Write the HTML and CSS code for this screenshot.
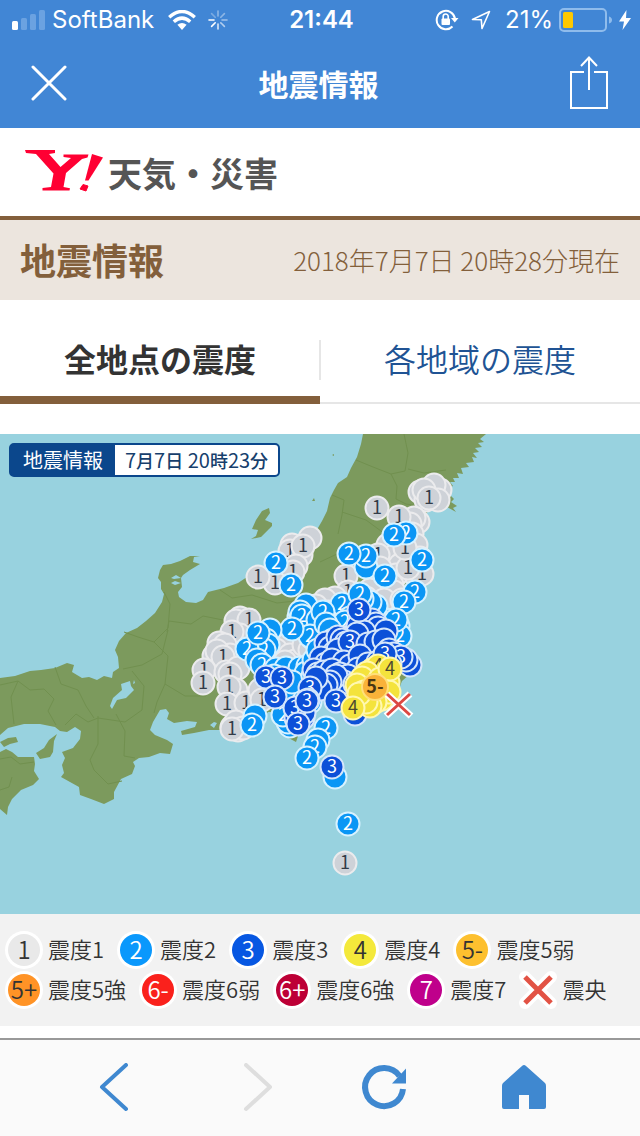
FILE: index.html
```html
<!DOCTYPE html>
<html lang="ja">
<head>
<meta charset="utf-8">
<meta name="viewport" content="width=device-width, initial-scale=1">
<title>地震情報</title>
<link rel="stylesheet" href="styles.css">
</head>
<body>
<header class="app-header">
  <div class="status">
    <div class="status-left">
      <svg width="34" height="20" viewBox="0 0 34 20" aria-hidden="true"><rect x="0" y="11" width="6" height="9" rx="1.5" fill="#fff"/><g fill="#6ba2e1"><rect x="9" y="8" width="6" height="12" rx="1.5"/><rect x="18" y="4" width="6" height="16" rx="1.5"/><rect x="27" y="0" width="6" height="20" rx="1.5"/></g></svg>
      <span>SoftBank</span>
      <svg class="wifi" width="28" height="20" viewBox="0 0 28 20" fill="none" stroke="#fff" stroke-width="3.4" aria-hidden="true"><path d="M1.2 7.2Q14-4.2 26.800 7.200M5.800 11.800Q14 4.400 22.200 11.800"/><path d="M14 20l-4.600-5.200Q14 11 18.600 14.800z" fill="#fff" stroke="none"/></svg>
      <svg class="spinner" width="20" height="20" viewBox="0 0 20 20" stroke="#fff" stroke-width="1.6" stroke-linecap="round" aria-hidden="true"><path d="M10 1v5" opacity=".4"/><path d="M16.400 3.600L12.800 7.200" opacity=".4"/><path d="M19 10h-5" opacity=".5"/><path d="M16.400 16.400l-3.600-3.600" opacity=".6"/><path d="M10 19v-5" opacity=".8"/><path d="M3.600 16.400l3.600-3.600M1 10h5"/><path d="M3.600 3.600l3.600 3.600" opacity=".3"/></svg>
    </div>
    <time class="clock">21:44</time>
    <div class="status-right">
      <svg width="24" height="22" viewBox="0 0 24 22" fill="none" stroke="#fff" stroke-width="2" aria-hidden="true"><path d="M17.500 17.500A9.200 9.200 0 1 1 20 9.500"/><path d="M16 9h7.500l-3.700 4.500z" fill="#fff" stroke="none"/><rect x="6.500" y="9.500" width="8.500" height="6.500" rx="1" fill="#fff" stroke="none"/><path d="M8.200 10V7.500a2.500 2.500 0 0 1 5 0V10" stroke-width="1.600"/></svg>
      <svg class="arrow" width="20" height="20" viewBox="0 0 20 20" fill="none" stroke="#fff" stroke-width="1.600" stroke-linejoin="round" aria-hidden="true"><path d="M1.500 9.500L18.500 1.500 11 18.500 10.300 9.800z"/></svg>
      <span>21%</span>
      <svg width="54" height="24" viewBox="0 0 54 24" aria-hidden="true"><rect x="1" y="1" width="46" height="22" rx="4" fill="none" stroke="#8fbcec" stroke-width="2"/><rect x="4" y="4" width="10" height="16" rx="1.500" fill="#fdc800"/><path d="M50 8.500q3 1 3 3.500t-3 3.500z" fill="#8fbcec"/></svg>
      <svg class="bolt" width="12" height="20" viewBox="0 0 12 20" fill="#fff" aria-hidden="true"><path d="M7.500 0L0 11.500h5L3.500 20 12 8H7z"/></svg>
    </div>
  </div>
  <div class="nav">
    <button type="button" class="icon-button" aria-label="閉じる"><svg width="36" height="36" viewBox="0 0 36 36" stroke="#fff" stroke-width="3" stroke-linecap="round"><path d="M2 2l32 32M34 2L2 34"/></svg></button>
    <h1 class="nav-title">地震情報</h1>
    <button type="button" class="icon-button" aria-label="共有"><svg width="38" height="54" viewBox="0 0 38 54" fill="none" stroke="#fff" stroke-width="2"><path d="M14 16H1v36h36V16H24M19 34V2M11 10l8-8.500L27 10"/></svg></button>
  </div>
</header>

<main>
  <a class="brand" href="#" aria-label="Y! 天気・災害">
    <svg width="80" height="44" viewBox="0 0 80 44" fill="#ff0033" aria-hidden="true"><path d="M0 0H30V3L24 4 35.500 17 46 8 38.500 7V4.500H63.500L62.500 7.500 57 9 41 23 38.500 37 45 38.200 44.500 40.500H17.500V38L26 37 28.500 23.500 11 4 1 3z"/><path d="M67 4L78 7.500 63.500 30.500H60z"/><path d="M58 34.500L63 36 61 41 55 39z" stroke="#ff0033" stroke-width="1" stroke-linejoin="round"/></svg>
    <span>天気・災害</span>
  </a>

  <section class="headline">
    <h2>地震情報</h2>
    <time datetime="2018-07-07T20:28">2018年7月7日 20時28分現在</time>
  </section>

  <nav class="tabs">
    <a class="tab tab-active" href="#points" aria-current="page">全地点の震度</a>
    <a class="tab" href="#areas">各地域の震度</a>
  </nav>

  <section class="map" id="points">
    <svg class="map-art" viewBox="0 434 640 480" role="img" aria-label="震度分布図">
      <rect x="0" y="434" width="640" height="480" fill="#98d2df"/>
      <g fill="#7c9a5d">
        <path d="M363 434L361 444 357 457 351 468 347 477 338 483 334 490 330 498 327 511 322 521 315 533 302 547 290 560 278 569 260 573 247 577 238 583 224 588 208 592 203 600 196 603 186 602 179 597 178 592 182 587 181 578 183 575 190 570 200 564 193 562 194 557 200 556 190 556 180 561 171 564 163 565 160 570 158 578 161 582 161 589 164 594 162 602 155 613 146 621 137 628 126 633 119 641 115 650 118 657 119 668 113 672 112 678 104 676 97 680 89 677 82 678 72 672 74 665 67 663 55 668 41 670 30 671 15 676 0 678V735L8 728 24 724 40 724 55 727 60 731 67 732 75 727 81 731 80 739 73 748 62 752 65 758 62 765 64 773 61 777 70 782 79 787 80 795 91 799 104 804 114 799 114 792 121 779 132 774 135 766 133 762 139 758 149 757 160 753 170 754 173 744 167 740 155 735 150 730 153 722 160 710 166 709 169 713 167 719 174 723 187 721 197 722 195 727 181 731 182 735 194 733 209 730 223 730 240 736 252 730 268 712 279 712 283 735 296 742 303 722 312 704 324 690 337 690 347 705 348 716 365 713 382 703 397 694 402 681 419 666 409 650 403 633 404 615 414 598 428 574 430 555 424 535 422 518 436 503 447 507 456 512 453 508 457 506 451 502 454 499 450 495 452 491 448 488 453 486 450 482 455 482 453 478 459 478 457 473 463 474 461 468 469 467 466 463 474 462 472 457 477 458 473 453 479 452 475 448 482 447 478 443 484 442 480 439 486 434z"/>
        <path d="M0 752L6 749 12 752 18 757 34 757 35 764 34 771 39 779 33 785 21 790 12 799 8 807 7 815 0 809z"/>
        <path d="M57 734L49 740 44 748 36 753 40 759 50 757 53 752 54 741zM0 742L8 738 16 737 18 742 10 744 4 747z"/>
        <path d="M269 508L262 511 256 520 252 529 258 530 256 536 251 539 261 537 272 526 272 523 265 520 270 513z"/>
        <path d="M312 501l2-3 1 3zM332 455l2-1v2z"/>
      </g>
      <g fill="#98d2df">
        <path d="M121 684L130 681 131 686 134 690 126 698 117 700 112 709 110 706 113 698 122 690z"/>
        <path d="M210 725l4-3 3 1-3 5zM171 578l5-3 5 3-7 1zM171 583l4-2 6 2-6 2zM134 680l1 3-2 1z"/>
      </g>
      <g fill="none" stroke="#71904f" stroke-width="1">
        <path d="M356 460l17 7 18 7 14-3 3-18-4-19M391 474l6 12-1 13 10 5 19 3M408 469l16 4 22-3M332 495l12 5-2 15-4 19M342 512l24 8 19 14 10 20M320 562l17-8 20-6 23 8M220 590l12 8 20-3 25 8 18-2M167 632l2-11 22 3 12-8 20 4M164 592l6 12-2 24-14 14-16-5-14-5M168 630l-6 24-20 11-19 4M154 642l14 14-3 28 20 12 21 0M165 684l-8 18-3 11M132 671l12 15-2 24-17 12-27-4-10 4-12-8-11 11M98 716v28l-8 16 4 10 14 14 14-3M116 714l9 17-1 25 11 2M55 667l6 17 17 6 8 16 8 12M0 685l18-4 12 9 14-1 10 10-6 12 8 14M18 681l-7 16 3 27M0 759l11-2 9 7 14-2M0 790l9-3 3-10"/>
      </g>
      <g id="markers" class="markers"></g>
      <g fill="none"><path d="M387 694l24 22M410 694l-24 22" stroke="#fff" stroke-width="7"/><path d="M387 694l23 21M410 694l-23 21" stroke="#dc4842" stroke-width="3"/></g>
    </svg>
    <div class="map-label"><strong>地震情報</strong><time datetime="2018-07-07T20:23">7<small>月</small>7<small>日</small> 20<small>時</small>23<small>分</small></time></div>
  </section>

  <ul class="legend">
    <li><b class="dot level-1">1</b><span>震度1</span></li>
    <li><b class="dot level-2">2</b><span>震度2</span></li>
    <li><b class="dot level-3">3</b><span>震度3</span></li>
    <li><b class="dot level-4">4</b><span>震度4</span></li>
    <li><b class="dot level-5l">5-</b><span>震度5弱</span></li>
    <li><b class="dot level-5u">5+</b><span>震度5強</span></li>
    <li><b class="dot level-6l">6-</b><span>震度6弱</span></li>
    <li><b class="dot level-6u">6+</b><span>震度6強</span></li>
    <li><b class="dot level-7">7</b><span>震度7</span></li>
    <li><svg class="epicenter" viewBox="0 0 32 32" fill="none" aria-hidden="true"><path d="M3 3l26 26M29 3L3 29" stroke="#fff" stroke-width="12" stroke-linecap="round"/><path d="M3 3l26 26M29 3L3 29" stroke="#e25244" stroke-width="5"/></svg><span>震央</span></li>
  </ul>
</main>

<footer class="toolbar">
  <button type="button" class="icon-button" aria-label="戻る"><svg width="60" height="50" viewBox="0 0 60 50" fill="none" stroke="#3f88d0" stroke-width="4" stroke-linecap="round" stroke-linejoin="round"><path d="M52 2L28 24l24 22"/></svg></button>
  <button type="button" class="icon-button" aria-label="進む" disabled><svg width="60" height="50" viewBox="0 0 60 50" fill="none" stroke="#dedede" stroke-width="4" stroke-linecap="round" stroke-linejoin="round"><path d="M32 2l24 22-24 22"/></svg></button>
  <button type="button" class="icon-button" aria-label="再読み込み"><svg width="60" height="50" viewBox="0 0 60 50" fill="none" stroke="#3f88d0" stroke-width="6"><path d="M49 26A19 19 0 1 1 45.500 13"/><path d="M52 5.500V20.500H38z" fill="#3f88d0" stroke="none"/></svg></button>
  <button type="button" class="icon-button" aria-label="ホーム"><svg width="60" height="50" viewBox="0 0 60 50" fill="#3f88d0"><path d="M28 3q2-2 4 0L51 20q1 1 1 3v21q0 2-2 2H35V32H25v14H10q-2 0-2-2V23q0-2 1-3z"/></svg></button>
</footer>
<script src="markers.js"></script>
</body>
</html>
```
FILE: styles.css
```css
* { box-sizing: border-box; }

body {
  margin: 0;
  min-height: 100vh;
  display: flex;
  flex-direction: column;
  background: #fff;
  color: #333;
  font-family: "Noto Sans CJK JP", sans-serif;
}

h1, h2, ul { margin: 0; padding: 0; }
a { text-decoration: none; color: inherit; }
svg { display: block; flex: none; }

.icon-button {
  display: flex;
  padding: 0;
  border: 0;
  background: none;
}

.app-header { background: #4186d5; color: #fff; }

.status {
  display: grid;
  grid-template-columns: 1fr auto 1fr;
  align-items: center;
  height: 40px;
  padding: 0 9px 0 12px;
  font: 24px/40px Inter, sans-serif;
}
.status-left, .status-right { display: flex; align-items: center; gap: 6px; }
.status-right { justify-content: flex-end; }
.wifi { margin-left: 8px; }
.spinner { margin-left: 6px; }
.arrow { margin: 0 8px 0 6px; }
.clock { font-weight: 600; }

.nav {
  display: flex;
  align-items: center;
  justify-content: space-between;
  height: 88px;
  padding: 0 32px 2px 31px;
}
.nav-title { font-size: 30px; line-height: 40px; font-weight: 700; }

.brand {
  display: flex;
  align-items: center;
  gap: 3px;
  height: 88px;
  padding: 0 25px;
  color: #555;
  font-size: 34px;
  font-weight: 700;
}

.headline {
  display: flex;
  align-items: center;
  justify-content: space-between;
  height: 84px;
  padding: 0 20px 2px;
  border-top: 4px solid #835f3b;
  background: #ece5de;
  color: #835f3b;
}
.headline h2 { font-size: 36px; line-height: 48px; font-weight: 700; }
.headline time { font-size: 26px; font-weight: 300; }

.tabs {
  display: grid;
  grid-template-columns: 1fr 1fr;
  height: 104px;
  margin-bottom: 30px;
  background: linear-gradient(#e6e6e6, #e6e6e6) center 40px / 2px 40px no-repeat;
}
.tab {
  padding-top: 34px;
  border-bottom: 2px solid #e6e6e6;
  color: #205394;
  font-size: 32px;
  line-height: 48px;
  font-weight: 350;
  text-align: center;
}
.tab-active { border-bottom: 8px solid #835f3b; color: #333; font-weight: 700; }

.map { position: relative; }
.map-art { width: 100%; height: auto; }
.markers { font-size: 18px; font-weight: 400; text-anchor: middle; }
.map-label {
  position: absolute;
  top: 9px;
  left: 9px;
  display: flex;
  border: 2px solid #0b478c;
  border-radius: 5px;
  background: #0b478c;
  line-height: 29px;
}
.map-label strong { padding: 0 12px; color: #fff; font-size: 20px; font-weight: 400; }
.map-label time {
  padding: 0 10px;
  border-radius: 0 3px 3px 0;
  background: #fff;
  color: #173f6d;
  font-size: 20px;
  font-weight: 400;
}
.map-label small { font-size: 18px; font-weight: 500; }

.legend {
  display: flex;
  flex-wrap: wrap;
  column-gap: 16px;
  padding: 16px 8px;
  background: #f2f2f2;
  list-style: none;
  font-size: 22px;
  line-height: 32px;
  font-weight: 350;
}
.legend li { display: flex; align-items: center; gap: 8px; height: 40px; }
.legend span { padding-bottom: 4px; }
.dot {
  width: 32px;
  height: 32px;
  border-radius: 50%;
  box-shadow: 0 0 0 3px #fff;
  color: #fff;
  font-size: 24px;
  line-height: 30px;
  font-weight: 350;
  text-align: center;
}
.level-1 { background: #e9e9e9; color: #333; }
.level-2 { background: #0a98fc; }
.level-3 { background: #0757e2; }
.level-4 { background: #f4e93b; color: #333; }
.level-5l { background: #fdc02f; color: #333; }
.level-5u { background: #ff9326; color: #333; }
.level-6l { background: #fa211c; }
.level-6u { background: #bd0036; }
.level-7 { background: #bf008b; }
.epicenter { width: 32px; height: 32px; overflow: visible; }

.toolbar {
  display: flex;
  align-items: center;
  justify-content: space-between;
  height: 98px;
  margin-top: auto;
  padding: 0 86px 0 74px;
  border-top: 2px solid #999;
  background: #fafafa;
}
```
FILE: markers.js
```js
// Station positions per intensity, drawn in order so stronger readings stay on top.
const levels = [
  { label: '1', fill: '#ced2d8', ring: '#ebebed', ink: '#333b47', points: [
    [310,538],[292,545],[301,555],[290,551],[303,546],[296,566],[293,572],[275,583],[258,577],
    [420,492],[440,490],[434,485],[426,500],[438,500],[424,490],[429,498],[377,508],[418,522],[414,518],[410,524],[399,517],
    [400,538],[388,545],[412,534],[416,545],[394,556],[378,555],[420,558],[400,565],[412,572],[422,574],[396,575],[408,568],[405,548],[380,568],[346,576],
    [370,590],[392,585],[394,592],[384,600],[402,600],[348,592],[366,598],[335,598],[325,600],[316,606],[328,612],[340,608],
    [240,618],[236,621],[249,620],[240,635],[232,632],[219,643],[225,645],[214,656],[230,655],[217,651],[223,657],
    [204,670],[226,672],[238,668],[230,674],[203,683],[236,690],[229,687],[227,704],[246,703],[260,690],[262,700],
    [232,727],[236,722],[238,730],[243,728],[232,729],[286,645],[276,650],[290,655],[295,661],[285,662],[304,645],[300,620],[310,650],[320,640],[330,630],[350,625],[370,640],[345,863]
  ] },
  { label: '2', fill: '#0a96f5', ring: '#d7f2ff', ink: '#fff', points: [
    [276,563],[291,585],[406,533],[394,535],[366,567],[366,556],[349,554],[422,560],[385,576],[415,592],[404,602],
    [398,626],[386,620],[376,606],[370,602],[362,599],[342,604],[360,594],[350,618],[345,622],[390,632],[400,636],[396,620],
    [306,605],[299,617],[300,612],[302,616],[318,620],[312,638],[310,636],[323,612],[326,624],[330,630],[292,629],
    [270,630],[266,640],[268,645],[264,650],[247,649],[258,633],[257,660],[262,665],[276,669],[286,668],[300,668],[308,666],[306,673],[314,660],[297,690],[290,700],
    [274,676],[284,690],[292,682],[313,676],[320,680],[310,702],[286,718],[290,726],[288,722],[283,715],[324,646],[318,650],[333,640],[344,638],[356,632],[370,624],
    [255,716],[252,725],[326,728],[318,740],[315,747],[307,758],[335,777],[348,824]
  ] },
  { label: '3', fill: '#0c50d8', ring: '#d5e6fb', ink: '#fff', points: [
    [358,626],[372,620],[376,624],[378,628],[386,631],[364,632],[357,634],[359,610],[326,643],[330,648],[338,637],[342,640],[346,643],
    [334,653],[342,652],[338,650],[355,648],[366,652],[374,654],[350,642],[368,644],[376,642],[384,640],[389,650],[394,654],[398,662],[410,665],[406,660],[401,657],
    [321,658],[326,664],[332,660],[344,662],[350,666],[360,656],[358,669],[368,664],[378,662],[390,664],[385,654],
    [314,670],[318,674],[324,672],[332,670],[340,674],[348,676],[344,682],[336,676],[330,682],[326,685],[320,689],[316,678],[310,688],
    [355,684],[362,688],[336,701],[355,714],[308,700],[302,708],[296,718],[303,718],[304,713],
    [266,677],[282,678],[275,697],[295,708],[307,701],[298,724],[332,767]
  ] },
  { label: '4', fill: '#f4e33c', ring: '#fff8b0', ink: '#4d4930', points: [
    [372,670],[378,666],[367,673],[362,678],[357,685],[364,692],[380,679],[388,682],[382,699],[389,692],[375,702],[370,706],[366,702],[359,694],[390,669],[353,708]
  ] },
  { label: '5-', fill: '#f9b239', ring: '#ffe07a', ink: '#4a3613', points: [[375,687]] },
];

const svg = 'http://www.w3.org/2000/svg';
const layer = document.getElementById('markers');

function add(name, attributes) {
  const node = document.createElementNS(svg, name);
  for (const key in attributes) node.setAttribute(key, attributes[key]);
  layer.appendChild(node);
  return node;
}

const stations = levels.flatMap(({ points, ...style }) => points.map(([cx, cy]) => ({ cx, cy, ...style })));

stations.forEach(({ cx, cy, label, fill, ring, ink }, index) => {
  const r = label === '5-' ? 13 : 11.5;
  add('circle', { cx, cy, r, fill, stroke: ring, 'stroke-width': 2 });
  // A number is only written where no later marker lies over it.
  const covered = stations.slice(index + 1).some(s => Math.hypot(s.cx - cx, s.cy - cy) < (s.label === '5-' ? 20 : 12));
  if (covered) return;
  const text = add('text', { x: cx, y: cy + 6, fill: ink });
  text.textContent = label;
  if (label === '5-') text.setAttribute('font-weight', '700');
});
```
